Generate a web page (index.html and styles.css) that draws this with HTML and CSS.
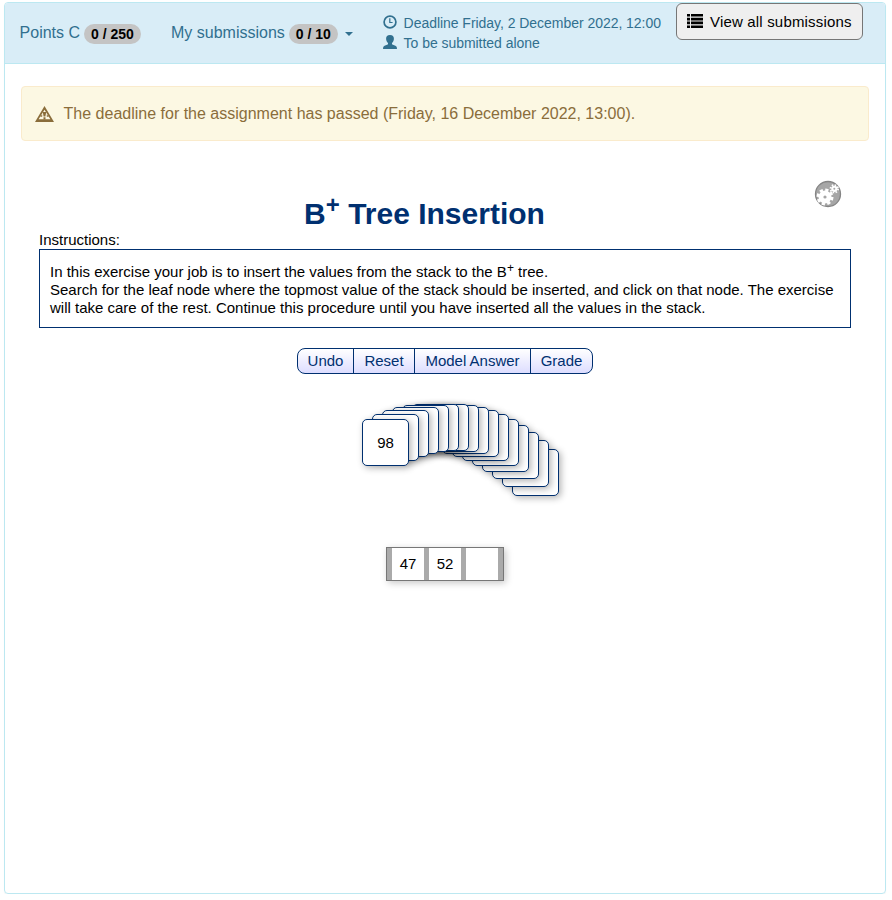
FILE: index.html
```
<!DOCTYPE html>
<html lang="en">
<head>
<meta charset="utf-8">
<title>B+ Tree Insertion</title>
<link rel="stylesheet" href="styles.css">
</head>
<body>
<main class="panel">
  <header class="bar">
    <div class="points">Points C <span class="badge">0 / 250</span></div>
    <div class="subs">My submissions <span class="badge">0 / 10</span><i class="caret"></i></div>
    <div class="meta">
      <div class="meta-row"><svg width="14" height="14" viewBox="0 0 14 14"><circle cx="7" cy="7" r="5.9" fill="none" stroke="currentColor" stroke-width="1.7"/><path d="M6.8 3.2V7.5H9.6" fill="none" stroke="currentColor" stroke-width="1.2"/></svg>Deadline Friday, 2 December 2022, 12:00</div>
      <div class="meta-row"><svg width="14" height="14" viewBox="0 0 14 14"><path fill="currentColor" d="M7 0C9.7 0 11 1.5 10.9 3.8C10.9 5.8 10 7 9 8V9.3C10 10.2 12.4 10.5 13.4 11.4Q14 12 14 14H0Q0 12 .6 11.4C1.6 10.5 4 10.2 5 9.3V8C4 7 3.1 5.8 3.1 3.8C3 1.5 4.3 0 7 0Z"/></svg>To be submitted alone</div>
    </div>
    <button class="view"><svg width="16" height="14" viewBox="0 0 16 14"><path d="M0 0h3v2.6H0zM4 0h12v2.6H4zM0 3.8h3v2.6H0zM4 3.8h12v2.6H4zM0 7.6h3v2.6H0zM4 7.6h12v2.6H4zM0 11.4h3V14H0zM4 11.4h12V14H4z"/></svg>View all submissions</button>
  </header>
  <div class="alert"><svg width="19" height="16" viewBox="0 0 19 16"><path fill="currentColor" fill-rule="evenodd" d="M9.5 0L19 16H0ZM9.5 3.8L3.6 13.2H15.4Z"/><path fill="currentColor" d="M7.8 6h3.4l-.8 4.5H8.6zM8.5 11.3h2v2.2h-2zM7.2 8.5v2.2H5zM11.8 8.5v2.2H14z"/></svg>The deadline for the assignment has passed (Friday, 16 December 2022, 13:00).</div>
  <section class="exercise">
    <svg class="settings" width="28" height="28" viewBox="0 0 28 28">
      <circle cx="14" cy="14" r="12.5" fill="#a6a6a6" stroke="#848484" stroke-width="1.3"/>
      <circle cx="11" cy="17" r="6.5" fill="#fff"/>
      <circle cx="11" cy="17" r="7.1" fill="none" stroke="#fff" stroke-width="2.8" stroke-dasharray="3.2 2.38"/>
      <circle cx="11" cy="17" r="1.6" fill="#a6a6a6"/>
      <circle cx="20.3" cy="8.8" r="3.1" fill="#fff"/>
      <circle cx="20.3" cy="8.8" r="3.8" fill="none" stroke="#fff" stroke-width="1.8" stroke-dasharray="1.5 1.48"/>
      <circle cx="20.3" cy="8.8" r="1" fill="#a6a6a6"/>
    </svg>
    <h1>B<sup>+</sup> Tree Insertion</h1>
    <div class="label">Instructions:</div>
    <div class="instructions">In this exercise your job is to insert the values from the stack to the B<sup>+</sup> tree.<br>Search for the leaf node where the topmost value of the stack should be inserted, and click on that node. The exercise will take care of the rest. Continue this procedure until you have inserted all the values in the stack.</div>
    <div class="controls"><button>Undo</button><button>Reset</button><button>Model Answer</button><button>Grade</button></div>
    <div class="stack">
      <div class="card" style="--drop:15px;--layer:16">98</div>
      <div class="card" style="--drop:10px;--layer:15"></div>
      <div class="card" style="--drop:6px;--layer:14"></div>
      <div class="card" style="--drop:3px;--layer:13"></div>
      <div class="card" style="--drop:1px;--layer:12"></div>
      <div class="card" style="--drop:0px;--layer:11"></div>
      <div class="card" style="--drop:0px;--layer:10"></div>
      <div class="card" style="--drop:1px;--layer:9"></div>
      <div class="card" style="--drop:3px;--layer:8"></div>
      <div class="card" style="--drop:6px;--layer:7"></div>
      <div class="card" style="--drop:10px;--layer:6"></div>
      <div class="card" style="--drop:15px;--layer:5"></div>
      <div class="card" style="--drop:21px;--layer:4"></div>
      <div class="card" style="--drop:28px;--layer:3"></div>
      <div class="card" style="--drop:36px;--layer:2"></div>
      <div class="card" style="--drop:45px;--layer:1"></div>
    </div>
    <div class="node"><span>47</span><span>52</span><span></span></div>
  </section>
</main>
</body>
</html>
```
FILE: styles.css
```
* { box-sizing: border-box; }
body { margin: 0; background: #fff; font: 15px/18px "Liberation Sans", Arial, sans-serif; color: #000; }
button { font: inherit; margin: 0; }
svg { display: block; flex: none; }
.panel { margin: 2px 0 0 4px; width: 882px; height: 892px; border: 1px solid #bce8f1; border-radius: 4px; box-shadow: 0 1px 1px rgba(0,0,0,.05); }
.bar { display: flex; height: 61px; padding-left: 14.6px; background: #d9edf7; border-bottom: 1px solid #bce8f1; border-radius: 3px 3px 0 0; color: #31708f; font-size: 16px; white-space: nowrap; }
.points, .subs { display: flex; align-items: center; height: 22px; margin-top: 19px; }
.points { width: 151.4px; }
.subs { width: 212px; }
.badge { margin: 2px 0 0 4px; height: 20px; padding: 0 7px; border-radius: 10px; background: #c4c4c4; color: #000; font-size: 14px; line-height: 20px; font-weight: bold; }
.caret { margin: 2px 0 0 7px; border: 4px solid transparent; border-top-color: currentColor; border-bottom: 0; }
.meta { width: 293px; padding-top: 10px; font-size: 14px; line-height: 20px; letter-spacing: -.04px; }
.meta-row { display: flex; align-items: center; gap: 6.6px; height: 20px; }
.meta-row svg { margin-top: -2px; }
.view { display: flex; align-items: center; gap: 7px; width: 187px; height: 37px; padding: 0 10px; border: 1px solid #767676; border-radius: 6px; background: #efefef; color: #000; font-size: 15px; letter-spacing: .18px; }
.view svg { margin-top: -1px; }
.alert { display: flex; align-items: center; gap: 9.6px; height: 55px; margin: 22px 16px 0; padding: 0 13px; border: 1px solid #faebcc; border-radius: 4px; background: #fcf8e3; color: #8a6d3b; font-size: 16px; }
.exercise { position: relative; margin: 0 34px; padding-top: 55px; }
.settings { position: absolute; top: 39px; right: 9px; }
h1 { margin: 0; height: 35px; padding-right: 41px; font-size: 30px; line-height: 35px; text-align: center; color: #003070; }
sup { position: relative; top: -.45em; font-size: 80%; line-height: 0; vertical-align: baseline; }
.label { height: 18px; }
.instructions { height: 79px; padding: 13px 10px 0; border: 1px solid #003070; }
.controls { display: flex; width: 296px; height: 26px; margin: 20px auto 0; border: 1px solid #003070; border-radius: 8px; overflow: hidden; background: linear-gradient(#fff, #ddf); }
.controls button { flex: none; width: 61px; padding: 0; border: 0; border-right: 1px solid #003070; background: none; color: #003070; line-height: 24px; white-space: nowrap; }
.controls button:nth-child(1) { width: 56px; }
.controls button:nth-child(3) { width: 116px; }
.controls button:last-child { border-right: 0; }
.stack { display: flex; width: 197px; height: 92px; margin: 30px 0 0 323px; }
.card { flex: none; z-index: var(--layer); width: 47px; height: 47px; margin: var(--drop) -37px 0 0; border: 1px solid #003070; border-radius: 5px; background: #fff; box-shadow: 2px 2px 7px rgba(0,0,0,.3); text-align: center; line-height: 46px; }
.node { display: flex; gap: 5px; width: 118px; height: 34px; margin: 51px auto 0; padding: 0 5px; border: 1px solid #777; background: #aaa; box-shadow: 2px 2px 7px rgba(0,0,0,.22); }
.node span { width: 32px; background: #fff; text-align: center; line-height: 32px; }
```
